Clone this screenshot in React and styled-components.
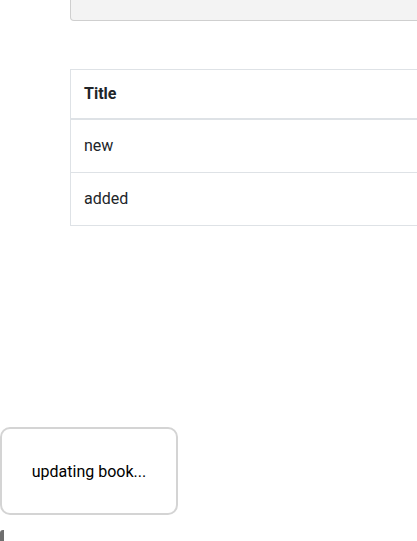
import React from 'react';
import styled, {createGlobalStyle} from 'styled-components';

const GlobalStyle = createGlobalStyle`
	html, body {
		margin: 0;
		padding: 0;
		overflow: hidden;
		background: #fff;
	}
	body {
		font-family: Roboto, "Liberation Sans", Arial, sans-serif;
		color: #212529;
		font-size: 16px;
	}
`;

const Page = styled.div`
	width: 560px;
	padding-left: 70px;
	display: flex;
	flex-direction: column;
	gap: 48px;
`;

const SearchPanel = styled.div`
	height: 20px;
	background: #f3f3f3;
	border: 1px solid #cfcfcf;
	border-top: none;
	border-radius: 0 0 4px 4px;
`;

const Table = styled.table`
	width: 100%;
	border-collapse: collapse;
	border: 1px solid #dee2e6;
`;

const HeadCell = styled.th`
	text-align: left;
	font-weight: 700;
	padding: 12px 13px;
	line-height: 24px;
	border-bottom: 2px solid #dee2e6;
`;

const Cell = styled.td`
	padding: 14px 13px;
	line-height: 24px;
	border-top: 1px solid #dee2e6;
`;

const Toast = styled.div`
	position: fixed;
	left: 0;
	top: 427px;
	width: 174px;
	height: 84px;
	border: 2px solid #d4d4d4;
	border-radius: 10px;
	background: #fff;
	display: flex;
	align-items: center;
	justify-content: center;
	color: #000;
	font-size: 16px;
`;

const DockTab = styled.div`
	position: fixed;
	left: 0;
	top: 530px;
	width: 4px;
	height: 20px;
	background: #6e6e6e;
	border-radius: 3px 0 0 0;
`;

const books = ['new', 'added'];

const App = () => {
	return (
		<>
			<GlobalStyle />
			<Page>
				<SearchPanel />
				<Table>
					<thead>
						<tr>
							<HeadCell>Title</HeadCell>
						</tr>
					</thead>
					<tbody>
						{books.map((title) => (
							<tr key={title}>
								<Cell>{title}</Cell>
							</tr>
						))}
					</tbody>
				</Table>
			</Page>
			<Toast>updating book...</Toast>
			<DockTab />
		</>
	);
};

export default App;
